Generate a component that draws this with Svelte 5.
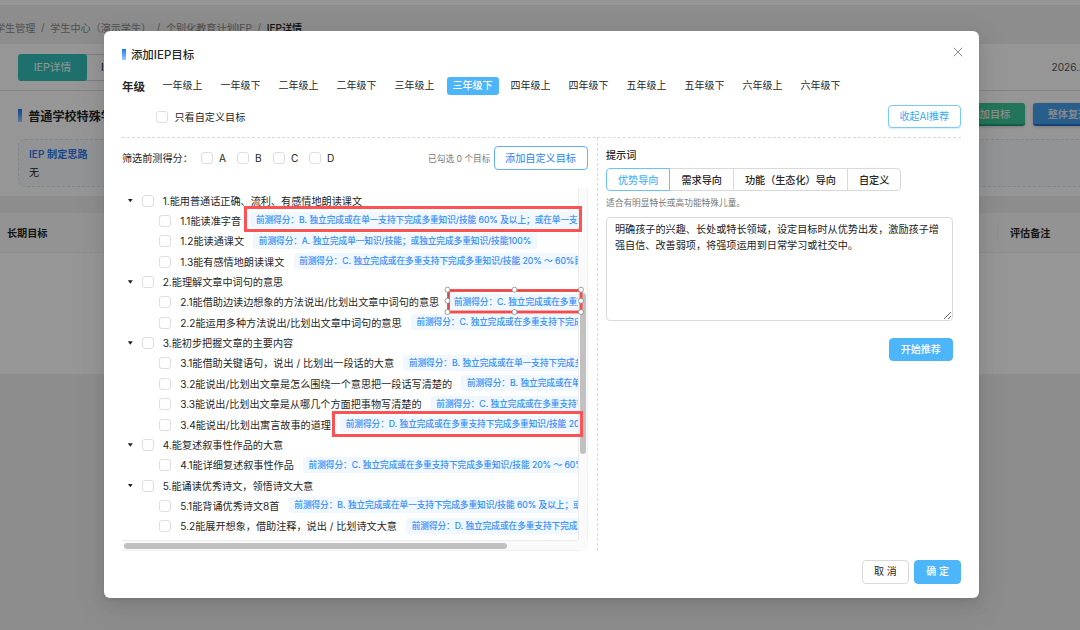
<script lang="ts">
  const grades = [
    '一年级上', '一年级下', '二年级上', '二年级下', '三年级上', '三年级下',
    '四年级上', '四年级下', '五年级上', '五年级下', '六年级上', '六年级下'
  ];
  let activeGrade = $state('三年级下');

  const levels = ['A', 'B', 'C', 'D'];
  const scores: Record<string, string> = {
    A: 'A. 独立完成单一知识/技能；或独立完成多重知识/技能100%',
    B: 'B. 独立完成或在单一支持下完成多重知识/技能 60% 及以上；或在单一支持下完成单一知识/技能',
    C: 'C. 独立完成或在多重支持下完成多重知识/技能 20% ～ 60%目标；或在多重支持下完成单一知识/技能',
    D: 'D. 独立完成或在多重支持下完成多重知识/技能 20% 以下'
  };

  const goals = [
    {
      title: '1.能用普通话正确、流利、有感情地朗读课文',
      children: [
        { title: '1.1能读准字音', score: 'B' },
        { title: '1.2能读通课文', score: 'A' },
        { title: '1.3能有感情地朗读课文', score: 'C' }
      ]
    },
    {
      title: '2.能理解文章中词句的意思',
      children: [
        { title: '2.1能借助边读边想象的方法说出/比划出文章中词句的意思', score: 'C' },
        { title: '2.2能运用多种方法说出/比划出文章中词句的意思', score: 'C' }
      ]
    },
    {
      title: '3.能初步把握文章的主要内容',
      children: [
        { title: '3.1能借助关键语句，说出 / 比划出一段话的大意', score: 'B' },
        { title: '3.2能说出/比划出文章是怎么围绕一个意思把一段话写清楚的', score: 'B' },
        { title: '3.3能说出/比划出文章是从哪几个方面把事物写清楚的', score: 'C' },
        { title: '3.4能说出/比划出寓言故事的道理', score: 'D' }
      ]
    },
    {
      title: '4.能复述叙事性作品的大意',
      children: [{ title: '4.1能详细复述叙事性作品', score: 'C' }]
    },
    {
      title: '5.能诵读优秀诗文，领悟诗文大意',
      children: [
        { title: '5.1能背诵优秀诗文8首', score: 'B' },
        { title: '5.2能展开想象，借助注释，说出 / 比划诗文大意', score: 'D' }
      ]
    }
  ];

  const modes = ['优势导向', '需求导向', '功能（生态化）导向', '自定义'];
  let activeMode = $state('优势导向');
  let prompt = $state(
    '明确孩子的兴趣、长处或特长领域，设定目标时从优势出发，激励孩子增强自信、改善弱项，将强项运用到日常学习或社交中。'
  );
</script>

<div class="screen">
  <div class="page">
    <div class="topbar"></div>
    <div class="breadcrumb">
      <span>学生管理</span><i>/</i><span>学生中心（演示学生）</span><i>/</i><span>个别化教育计划IEP</span><i>/</i><b>IEP详情</b>
    </div>
    <div class="panel">
      <div class="panel-tabs">
        <div class="page-tabs">
          <span class="page-tab on">IEP详情</span>
          <span class="page-tab">IEP评估</span>
        </div>
        <span class="date">2026.2</span>
      </div>
      <div class="panel-head">
        <h2><span class="bar"></span>普通学校特殊学生</h2>
        <div class="actions">
          <span class="action green">添加目标</span>
          <span class="action blue">整体复述</span>
        </div>
      </div>
      <div class="idea">
        <strong>IEP 制定思路</strong>
        <span>无</span>
      </div>
    </div>
    <div class="table">
      <div class="table-head">
        <span>长期目标</span>
        <span class="remark">评估备注</span>
      </div>
    </div>
  </div>

  <div class="mask"></div>

  <div class="modal">
    <div class="title">
      <span class="bar"></span>添加IEP目标
      <svg class="close" viewBox="0 0 10 10"><path d="M.7.7l8.6 8.6M9.3.7L.7 9.3" /></svg>
    </div>

    <div class="grades">
      <b>年级</b>
      {#each grades as grade}
        <button class="grade" class:active={grade === activeGrade} onclick={() => (activeGrade = grade)}>{grade}</button>
      {/each}
    </div>

    <div class="only">
      <span class="box"></span>
      <span>只看自定义目标</span>
      <button class="btn collapse">收起AI推荐</button>
    </div>

    <div class="body">
      <div class="left">
        <div class="filter">
          <span class="filter-label">筛选前测得分：</span>
          {#each levels as level}
            <span class="level"><span class="box"></span>{level}</span>
          {/each}
          <span class="count">已勾选 0 个目标</span>
          <button class="btn add">添加自定义目标</button>
        </div>

        <div class="scroller">
          <div class="tree">
            {#each goals as goal}
              <div class="row">
                <span class="caret"></span>
                <span class="box"></span>
                <span class="name">{goal.title}</span>
              </div>
              {#each goal.children as child}
                <div class="row child">
                  <span class="box"></span>
                  <span class="name">{child.title}</span>
                  <span class="tag">前测得分：{scores[child.score]}</span>
                </div>
              {/each}
            {/each}
          </div>
          <div class="track-v"><div class="thumb"></div></div>
          <div class="track-h"><div class="thumb"></div></div>
          <div class="corner"></div>
        </div>
      </div>

      <div class="right">
        <div class="label">提示词</div>
        <div class="modes">
          {#each modes as mode}
            <button class="mode" class:active={mode === activeMode} onclick={() => (activeMode = mode)}>{mode}</button>
          {/each}
        </div>
        <div class="hint">适合有明显特长或高功能特殊儿童。</div>
        <textarea bind:value={prompt} spellcheck="false"></textarea>
        <button class="btn primary start">开始推荐</button>
      </div>
    </div>

    <div class="footer">
      <button class="btn">取 消</button>
      <button class="btn primary">确 定</button>
    </div>
  </div>

  <div class="mark mark-1"></div>
  <div class="mark mark-3"></div>
  <svg class="selection" viewBox="0 0 142 30">
    <rect class="frame" x="4.5" y="4.5" width="132.5" height="21.5" />
    <rect class="guide" x="4.5" y="4.5" width="132.5" height="21.5" />
    {#each [3.5, 70.5, 137] as x}
      {#each [3.7, 14.8, 26] as y}
        {#if !(x === 70.5 && y === 14.8)}
          <circle cx={x} cy={y} r="2.5" />
        {/if}
      {/each}
    {/each}
  </svg>
</div>

<style>
  :global(body) {
    overflow: hidden;
  }

  .screen {
    position: relative;
    width: 1080px;
    height: 630px;
    overflow: hidden;
    font-family: Inter, "Noto Sans CJK SC", sans-serif;
    font-size: 10.15px;
    color: #262626;
  }

  .screen * {
    box-sizing: border-box;
  }

  button {
    font: inherit;
    color: inherit;
    background: none;
    border: none;
    padding: 0;
    white-space: nowrap;
  }

  /* page under the dialog */
  .page {
    height: 630px;
    background: #f0f0f0;
  }

  .topbar {
    height: 5px;
    background: #fff;
  }

  .breadcrumb {
    height: 39px;
    padding: 5px 0 0 6px;
    margin-left: -11px;
    display: flex;
    align-items: center;
    font-size: 10.1px;
    color: #888;
    white-space: nowrap;
  }

  .breadcrumb i {
    font-style: normal;
    margin: 0 5.6px;
  }

  .breadcrumb b {
    font-weight: 500;
    color: #222;
  }

  .panel {
    height: 152px;
    background: #fff;
    overflow: hidden;
  }

  .panel-tabs {
    height: 47px;
    padding: 0 0 0 18px;
    display: flex;
    align-items: center;
    justify-content: space-between;
    border-bottom: 1px solid #e0e0e0;
  }

  .page-tabs {
    display: flex;
    height: 27px;
    border: 1px solid #d0d7dd;
    border-radius: 4px;
  }

  .page-tab {
    width: 90px;
    padding-left: 14px;
    line-height: 25px;
    color: #222;
  }

  .page-tab.on {
    width: 69px;
    margin: -1px 0 -1px -1px;
    padding: 0;
    line-height: 27px;
    text-align: center;
    background: #32beb8;
    color: #fff;
    border-radius: 3px;
    font-size: 10.7px;
  }

  .date {
    width: 28.5px;
    color: #555;
    white-space: nowrap;
  }

  .panel-head {
    height: 48px;
    padding-left: 18px;
    display: flex;
    align-items: center;
    justify-content: space-between;
  }

  h2 {
    margin: 0;
    display: flex;
    align-items: center;
    gap: 6.5px;
    font-size: 12.1px;
    font-weight: 600;
  }

  .bar {
    width: 3.7px;
    height: 11px;
    background: linear-gradient(#1677ff, #9fcbff);
  }

  h2 .bar {
    height: 13px;
  }

  .actions {
    display: flex;
    gap: 8px;
    width: 125px;
    margin-top: -1px;
    font-weight: 500;
    color: #f0f0f0;
  }

  .action {
    flex: none;
    width: 70px;
    height: 23.5px;
    border-radius: 3px;
    line-height: 22px;
    text-align: center;
    box-shadow: 0 1px 3px rgba(0, 0, 0, 0.2);
  }

  .green {
    background: #3ac79a;
    border-bottom: 2px solid #209f77;
  }

  .blue {
    background: #44a0ef;
    border-bottom: 2px solid #2673d0;
  }

  .idea {
    height: 48px;
    margin-left: 18px;
    margin-right: -10px;
    padding: 6px 10px;
    border: 1px dashed #dfe3ec;
    border-radius: 7px;
    background: #f8fafe;
    display: flex;
    flex-direction: column;
    line-height: 17.5px;
  }

  .idea strong {
    color: #2e7bea;
    font-weight: 600;
  }

  .table {
    height: 161px;
    margin-top: 17px;
    background: #fff;
  }

  .table-head {
    height: 40px;
    background: #fafafa;
    border-bottom: 1px solid #f0f0f0;
    padding-left: 7px;
    display: flex;
    align-items: center;
    justify-content: space-between;
    font-weight: 600;
  }

  .remark {
    width: 83px;
    padding-left: 12px;
    border-left: 1px solid #f0f0f0;
  }

  .mask {
    position: absolute;
    inset: 0;
    background: rgba(0, 0, 0, 0.41);
  }

  /* dialog */
  .modal {
    position: absolute;
    left: 104px;
    top: 31px;
    width: 875px;
    height: 567px;
    padding: 11px 18px 0;
    background: #fff;
    border-radius: 6px;
    box-shadow: 0 6px 16px rgba(0, 0, 0, 0.08), 0 3px 6px -4px rgba(0, 0, 0, 0.12), 0 9px 28px 8px rgba(0, 0, 0, 0.05);
  }

  .title {
    height: 24px;
    display: flex;
    align-items: center;
    font-size: 11.5px;
    font-weight: 500;
  }

  .title .bar {
    margin-right: 5.2px;
  }

  .close {
    width: 10px;
    height: 10px;
    margin: -5px -2px 0 auto;
    stroke: #8c8c8c;
    stroke-width: 1;
    fill: none;
  }

  .grades {
    height: 39px;
    display: flex;
    align-items: center;
  }

  .grades b {
    width: 34.5px;
    font-size: 11.5px;
    font-weight: 700;
  }

  .grade {
    width: 52px;
    height: 18px;
    margin-right: 6px;
    border-radius: 3px;
    line-height: 17px;
    font-size: 10px;
  }

  .grade.active {
    background: #4db5f9;
    color: #fff;
    font-weight: 500;
  }

  .box {
    flex: none;
    width: 12px;
    height: 12px;
    border: 1px solid #dedede;
    border-radius: 3px;
    background: #fff;
  }

  .only {
    height: 32px;
    padding: 0 0 9px 34.4px;
    display: flex;
    align-items: center;
    gap: 6px;
  }

  .btn {
    height: 23.5px;
    padding: 0 11px;
    border: 1px solid #d9d9d9;
    border-radius: 4px;
    background: #fff;
    line-height: 21px;
    font-size: 10px;
  }

  .primary {
    background: #4db5f9;
    border-color: #4db5f9;
    color: #fff;
    font-weight: 500;
  }

  .collapse {
    width: 73.5px;
    margin-left: auto;
    padding: 0;
    color: #3ba9f5;
    border-color: #7cc8fa;
    box-shadow: 0 1px 2px rgba(77, 181, 249, 0.25);
  }

  .body {
    height: 414px;
    display: flex;
    border-top: 1px dashed #d9d9d9;
  }

  .left {
    width: 476px;
    padding-right: 9.5px;
    border-right: 1px dashed #d9d9d9;
  }

  .filter {
    height: 50px;
    padding-bottom: 10px;
    display: flex;
    align-items: center;
  }

  .filter-label {
    width: 79px;
    margin-top: -1px;
    white-space: nowrap;
  }

  .level {
    width: 36px;
    display: flex;
    align-items: center;
    gap: 6px;
  }

  .count {
    margin-left: auto;
    margin-right: 3px;
    font-size: 8.7px;
    color: #777;
  }

  .add {
    width: 94px;
    padding: 0;
    color: #1f83fb;
    border-color: #69aefc;
    font-size: 10.15px;
  }

  .scroller {
    height: 363px;
    display: grid;
    grid-template-columns: 455.5px 10px;
    grid-template-rows: 352px 10.5px;
  }

  .tree {
    padding-top: 2.4px;
    overflow: hidden;
  }

  .row {
    width: 1000px;
    height: 20.37px;
    padding-left: 5.8px;
    display: flex;
    align-items: center;
    white-space: nowrap;
  }

  .caret {
    width: 5px;
    height: 3.5px;
    margin-right: 9px;
    background: #222;
    clip-path: polygon(0 0, 100% 0, 50% 100%);
  }

  .row .name {
    margin-left: 8.9px;
    margin-top: -1px;
  }

  .child {
    padding-left: 37.3px;
  }

  .tag {
    height: 16px;
    margin-left: 9.3px;
    margin-top: -1px;
    padding: 0 5.5px;
    border-radius: 3px;
    background: #f0f7ff;
    color: #2b8afa;
    font-size: 8.62px;
    line-height: 17px;
    -webkit-text-stroke: 0.15px #2b8afa;
  }

  .track-v,
  .track-h,
  .corner {
    background: #fafafa;
  }

  .track-v {
    border-left: 1px solid #ebebeb;
    border-right: 1px solid #f0f0f0;
    padding: 104.5px 1px 0 1.5px;
  }

  .track-v .thumb {
    width: 6px;
    height: 161px;
    border-radius: 3px;
    background: #c1c1c1;
  }

  .track-h {
    border-top: 1px solid #ebebeb;
    border-bottom: 1px solid #f0f0f0;
    padding: 2px 0 0 2px;
  }

  .track-h .thumb {
    width: 383px;
    height: 6px;
    border-radius: 3px;
    background: #c1c1c1;
  }

  .right {
    padding: 8.5px 0 0 8px;
    width: 355px;
    display: flex;
    flex-direction: column;
  }

  .label {
    height: 21px;
    line-height: 16px;
    font-weight: 500;
  }

  .modes {
    display: flex;
    height: 23.5px;
  }

  .mode {
    height: 23.5px;
    padding: 0 11px;
    border: 1px solid #d9d9d9;
    margin-left: -1px;
    font-weight: 500;
    font-size: 10.12px;
    line-height: 22px;
  }

  .mode:first-child {
    margin-left: 0;
    border-radius: 4px 0 0 4px;
  }

  .mode:last-child {
    border-radius: 0 4px 4px 0;
  }

  .mode.active {
    position: relative;
    color: #4db5f9;
    border-color: #6cc2fa;
  }

  .hint {
    height: 25.5px;
    line-height: 25.5px;
    font-size: 8.7px;
    color: #777;
  }

  textarea {
    width: 347px;
    height: 104px;
    margin: 0;
    padding: 3px 8px;
    border: 1px solid #d9d9d9;
    border-radius: 4px;
    outline: none;
    font: inherit;
    line-height: 16px;
    color: #222;
  }

  .start {
    width: 64.5px;
    margin: 17px 0 0 auto;
  }

  .footer {
    padding-top: 9px;
    display: flex;
    justify-content: flex-end;
    gap: 5.5px;
  }

  /* annotations over the list */
  .mark {
    position: absolute;
    border: 3px solid #fb5354;
  }

  .mark-1 {
    left: 244px;
    top: 205.5px;
    width: 337.5px;
    height: 26px;
  }

  .mark-3 {
    left: 332px;
    top: 411px;
    width: 251px;
    height: 26px;
  }

  .selection {
    position: absolute;
    left: 444px;
    top: 286px;
    width: 142px;
    height: 30px;
  }

  .frame {
    fill: none;
    stroke: #fb5354;
    stroke-width: 3;
  }

  .guide {
    fill: none;
    stroke: #a04a4a;
    stroke-width: 0.7;
    stroke-dasharray: 1.5 1;
  }

  circle {
    fill: #fff;
    stroke: #888;
    stroke-width: 0.8;
  }
</style>
